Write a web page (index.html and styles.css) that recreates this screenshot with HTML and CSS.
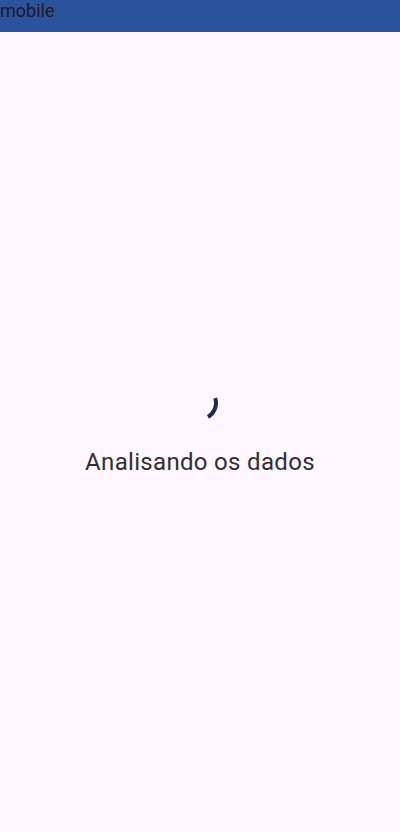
FILE: index.html
```html
<!DOCTYPE html>
<html lang="pt">
<head>
<meta charset="utf-8">
<title>mobile</title>
<link rel="stylesheet" href="styles.css">
</head>
<body>
<div class="app">
  <header class="topbar">mobile</header>
  <main class="content">
    <div class="loader">
      <svg class="spinner" width="36" height="36" viewBox="0 0 36 36" aria-hidden="true">
        <path d="M33.2 13.1 A16 16 0 0 1 26 31.9" fill="none" stroke="#1f2a5c" stroke-width="4" stroke-linecap="butt"/>
      </svg>
      <p class="label">Analisando os dados</p>
    </div>
  </main>
</div>
</body>
</html>
```
FILE: styles.css
```css
* { box-sizing: border-box; }
html, body { margin: 0; padding: 0; height: 100%; }
body {
  background: #fef7ff;
  font-family: Roboto, "Noto Sans", sans-serif;
  color: #1d1b20;
}
.app {
  display: flex;
  flex-direction: column;
  height: 832px;
}
.topbar {
  height: 32px;
  background: #2b529d;
  color: #1d1b20;
  font-size: 18px;
  line-height: 22px;
  padding: 0;
}
.content {
  flex: 1;
  display: flex;
  align-items: center;
  justify-content: center;
}
.loader {
  display: flex;
  flex-direction: column;
  align-items: center;
  gap: 25px;
  padding-bottom: 2px;
}
.spinner { display: block; }
.label {
  margin: 0;
  font-size: 24px;
  line-height: 32px;
  letter-spacing: 0.32px;
  color: #322f35;
}
```
